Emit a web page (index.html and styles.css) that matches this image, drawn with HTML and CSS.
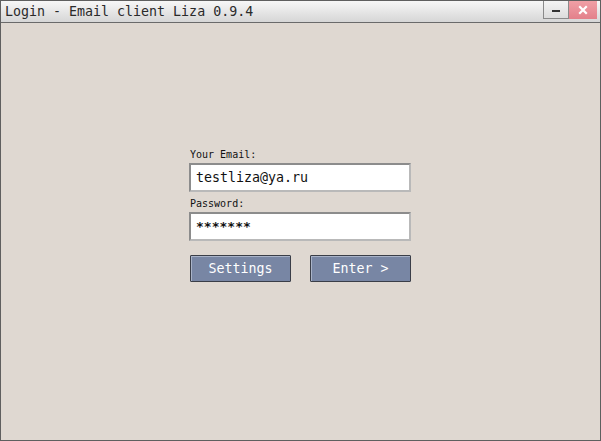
FILE: index.html
```html
<!DOCTYPE html>
<html>
<head>
<meta charset="utf-8">
<link rel="stylesheet" href="styles.css">
</head>
<body>
<div class="window">
  <div class="titlebar">
    <div class="title">Login - Email client Liza 0.9.4</div>
    <div class="controls">
      <div class="btn-min"><span class="min-bar"></span></div>
      <div class="btn-close">
        <svg width="10" height="10" viewBox="0 0 10 10"><path d="M2 2 L8 8 M8 2 L2 8" stroke="#fff" stroke-width="2.2" stroke-linecap="square"/></svg>
      </div>
    </div>
  </div>
  <div class="content">
    <div class="form">
      <div class="label">Your Email:</div>
      <div class="input">testliza@ya.ru</div>
      <div class="label">Password:</div>
      <div class="input pass">*******</div>
      <div class="buttons">
        <div class="button">Settings</div>
        <div class="button">Enter &gt;</div>
      </div>
    </div>
  </div>
</div>
</body>
</html>
```

FILE: styles.css
```css
html, body {
  margin: 0;
  padding: 0;
  background: #dfd8d1;
}
.window {
  width: 601px;
  height: 441px;
  box-sizing: border-box;
  border: 1px solid #5f5f5f;
  display: flex;
  flex-direction: column;
  font-family: "DejaVu Sans Mono", monospace;
}
.titlebar {
  height: 22px;
  box-sizing: border-box;
  border-bottom: 1px solid #6a6a6a;
  background: linear-gradient(#f7f7f7, #d6d6d6);
  display: flex;
  align-items: flex-start;
  justify-content: space-between;
}
.title {
  font-size: 13.3px;
  color: #2a2a2a;
  padding-left: 4px;
  line-height: 21px;
}
.controls {
  display: flex;
  padding-right: 3px;
}
.btn-min {
  width: 26px;
  height: 18px;
  box-sizing: border-box;
  border: 1px solid #8a8a8a;
  border-top: none;
  background: linear-gradient(#f4f4f4, #dcdcdc);
  display: flex;
  align-items: center;
  justify-content: center;
}
.min-bar {
  width: 8px;
  height: 2px;
  background: #333;
  margin-top: 2px;
}
.btn-close {
  width: 28px;
  height: 18px;
  box-sizing: border-box;
  background: linear-gradient(#f0a0a6, #e3808a);
  display: flex;
  align-items: center;
  justify-content: center;
}
.content {
  flex: 1;
  display: flex;
  justify-content: center;
  padding-top: 126px;
  padding-right: 1px;
}
.form {
  width: 222px;
  display: flex;
  flex-direction: column;
}
.label {
  font-size: 10px;
  color: #111;
  line-height: 12px;
  padding-left: 1px;
  margin-bottom: 2px;
}
.input {
  height: 29px;
  box-sizing: border-box;
  background: #fff;
  border: 2px solid #8c8c8c;
  border-right-color: #b9b9b9;
  border-bottom-color: #b9b9b9;
  font-size: 13.3px;
  line-height: 25px;
  padding-left: 5px;
  color: #111;
  margin-bottom: 6px;
}
.pass {
  font-size: 13px;
  letter-spacing: 0px;
  font-weight: bold;
}
.buttons {
  display: flex;
  justify-content: space-between;
  padding-left: 1px;
  margin-top: 8px;
}
.button {
  width: 101px;
  height: 27px;
  box-sizing: border-box;
  background: #7886a4;
  border: 1px solid #3a3e48;
  box-shadow: inset 1px 1px 0 #a9b3c8;
  border-radius: 1px;
  color: #fff;
  font-size: 13.3px;
  line-height: 25px;
  text-align: center;
}
```
